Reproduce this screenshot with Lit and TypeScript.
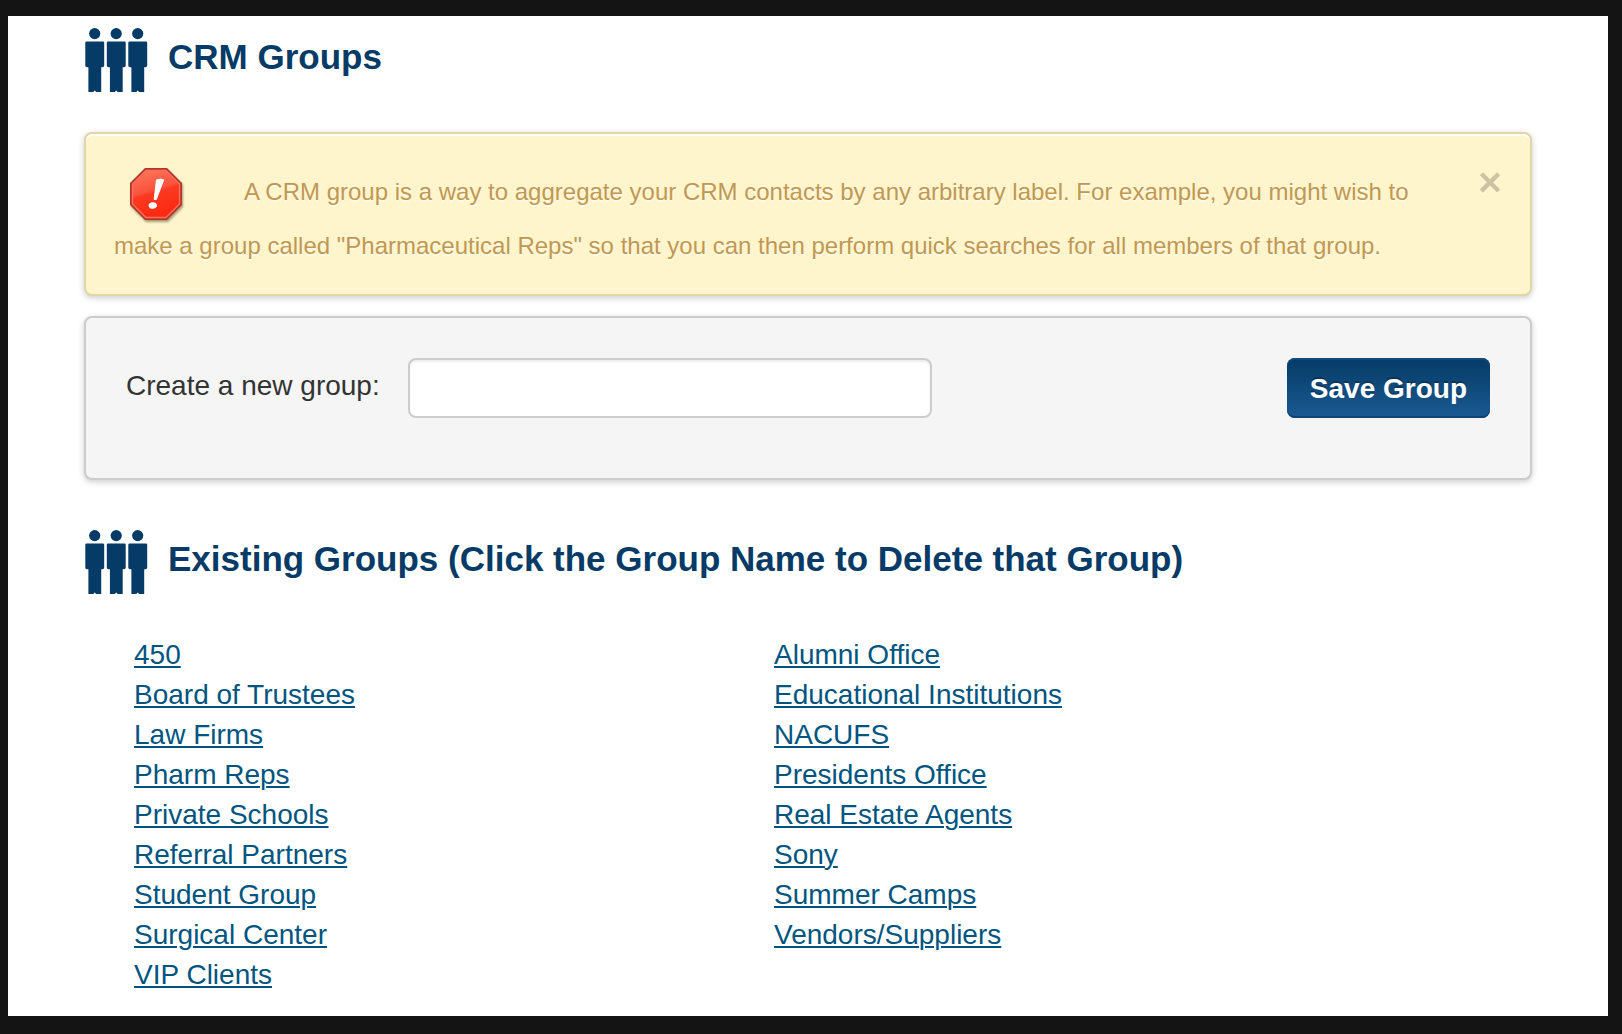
import { LitElement, html, svg, css } from "lit";
import { customElement, property, state } from "lit/decorators.js";

const GROUPS = [
  "450",
  "Alumni Office",
  "Board of Trustees",
  "Educational Institutions",
  "Law Firms",
  "NACUFS",
  "Pharm Reps",
  "Presidents Office",
  "Private Schools",
  "Real Estate Agents",
  "Referral Partners",
  "Sony",
  "Student Group",
  "Summer Camps",
  "Surgical Center",
  "Vendors/Suppliers",
  "VIP Clients",
];

/* One standing figure, starting at the given x inside the 64-unit icon. */
const person = (x: number) => svg`
  <g transform="translate(${x} 0)">
    <circle cx="9.7" cy="5.6" r="5.6" />
    <path d="M1.500 13.500H18q1.200 0 1.200 1.200V37.500q0 1.700-1.700 1.700H16.200V64H11.200L9.700 62.600 8.200 64H3.400V39.200H2Q.3 39.200.3 37.500V14.700Q.3 13.500 1.500 13.500z" />
  </g>
`;

@customElement("section-heading")
export class SectionHeading extends LitElement {
  static styles = css`
    :host {
      display: block;
    }
    .row {
      display: flex;
      gap: 20px;
      align-items: flex-start;
    }
    .people {
      flex: none;
      width: 64px;
      height: 64px;
      fill: #053b66;
    }
    .title {
      margin: 0;
      font-size: 35px;
      line-height: 58px;
      font-weight: bold;
      color: #053b66;
    }
  `;

  @property() text = "";

  render() {
    return html`
      <div class="row">
        <svg class="people" viewBox="0 0 64 64" aria-hidden="true">${[1, 22.5, 44].map(person)}</svg>
        <h2 class="title">${this.text}</h2>
      </div>
    `;
  }
}

@customElement("info-banner")
export class InfoBanner extends LitElement {
  static styles = css`
    :host {
      display: block;
    }
    .banner {
      display: flex;
      gap: 18px;
      align-items: flex-start;
      padding: 28px;
      border: 2px solid #dfd8a4;
      border-radius: 8px;
      background: #fff5cc;
      box-shadow: 0 2px 6px rgba(0, 0, 0, 0.2), inset 0 2px 0 #fff;
      color: #c09853;
      text-shadow: 0 2px 0 rgba(255, 255, 255, 0.5);
    }
    .message {
      flex: 1;
      margin: 0;
      font-size: 24px;
      line-height: 40px;
    }
    .stop {
      width: 64px;
      height: 64px;
      margin: 0 56px 0 10px;
      vertical-align: middle;
    }
    .close {
      flex: none;
      width: 24px;
      margin: 0;
      padding: 0;
      border: 0;
      background: none;
      font: bold 41px/40px "Liberation Sans", Arial, sans-serif;
      color: #000;
      opacity: 0.2;
      text-shadow: 0 2px 0 #fff;
      cursor: pointer;
    }
  `;

  @state() private open = true;

  render() {
    if (!this.open) return null;
    return html`
      <div class="banner">
        <p class="message"><svg class="stop" viewBox="0 0 64 64" aria-hidden="true">
            <defs>
              <linearGradient id="face" x1="0" y1="0" x2="0.3" y2="1">
                <stop offset="0" stop-color="#ff7a5e" />
                <stop offset="0.5" stop-color="#f9523c" />
                <stop offset="0.56" stop-color="#fb3a22" />
                <stop offset="1" stop-color="#fd2a10" />
              </linearGradient>
              <filter id="drop" x="-20%" y="-20%" width="140%" height="140%">
                <feDropShadow dx="1" dy="2" stdDeviation="1.2" flood-color="#6b5a30" flood-opacity="0.6" />
              </filter>
            </defs>
            <path d="M21 6H43L58 21V43L43 58H21L6 43V21Z" fill="#b8352a" filter="url(#drop)" />
            <path d="M22 8.500H42L55.500 22V42L42 55.500H22L8.500 42V22Z" fill="url(#face)" stroke="#f5705e" stroke-width="1.400" />
            <path d="M32.500 18q4.500-1.800 7.200-.2L32.300 37.500h-2.200Z" fill="#fff" stroke="#fff" stroke-linejoin="round" />
            <ellipse cx="28.800" cy="43.500" rx="4.200" ry="3.200" fill="#fff" transform="rotate(-10 28.800 43.500)" />
          </svg>A CRM group is a way to aggregate your CRM contacts by any arbitrary label. For example, you might wish to make a group called "Pharmaceutical Reps" so that you can then perform quick searches for all members of that group.</p>
        <button class="close" type="button" aria-label="Close" @click=${() => (this.open = false)}>×</button>
      </div>
    `;
  }
}

@customElement("app-root")
export class AppRoot extends LitElement {
  static styles = css`
    :host {
      display: flex;
      box-sizing: border-box;
      min-height: 100vh;
      padding: 16px 14px 18px 8px;
      background: #141414;
      font-family: "Liberation Sans", Arial, sans-serif;
      font-size: 28px;
      line-height: 40px;
      color: #333;
    }
    .page {
      flex: 1;
      padding: 12px 76px 20px;
      background: #fff;
    }
    .banner {
      margin: 40px 0 20px;
    }
    .panel {
      display: flex;
      align-items: flex-start;
      margin-bottom: 50px;
      padding: 40px 40px 60px;
      border: 2px solid #ccc;
      border-radius: 8px;
      background: #f5f5f5;
      box-shadow: 0 2px 6px rgba(0, 0, 0, 0.2);
    }
    .label {
      flex: none;
      margin-right: 28px;
      line-height: 56px;
    }
    .field {
      box-sizing: border-box;
      flex: 0 1 524px;
      min-width: 0;
      height: 60px;
      padding: 8px 12px;
      border: 2px solid #ccc;
      border-radius: 8px;
      background: #fff;
      box-shadow: inset 0 2px 2px rgba(0, 0, 0, 0.075);
      font: inherit;
      color: #555;
    }
    .save {
      box-sizing: border-box;
      flex: none;
      height: 60px;
      margin-left: auto;
      padding: 2px 23px 0;
      border: 0;
      border-radius: 8px;
      background: linear-gradient(#053b66, #1a5a92);
      box-shadow: inset 0 2px 0 #11497a, inset 0 -2px 0 #0f4474;
      font: inherit;
      font-weight: bold;
      color: #fff;
      text-shadow: 0 -2px 0 rgba(0, 0, 0, 0.25);
      cursor: pointer;
    }
    .groups {
      display: grid;
      grid-template-columns: repeat(2, minmax(0, 640px));
      margin: 41px 0 0;
      padding: 0 0 0 50px;
      list-style: none;
    }
    .link {
      color: #005580;
      text-decoration: underline;
      text-decoration-thickness: 2px;
      text-underline-offset: 2px;
    }
  `;

  @state() private groups = GROUPS;

  private save(e: Event) {
    e.preventDefault();
    const field = this.renderRoot.querySelector<HTMLInputElement>("#group-name")!;
    const name = field.value.trim();
    if (!name) return;
    this.groups = [...this.groups, name];
    field.value = "";
  }

  private remove(e: Event, name: string) {
    e.preventDefault();
    this.groups = this.groups.filter((g) => g !== name);
  }

  render() {
    return html`
      <main class="page">
        <section-heading text="CRM Groups"></section-heading>
        <info-banner class="banner"></info-banner>
        <form class="panel" @submit=${this.save}>
          <label class="label" for="group-name">Create a new group:</label>
          <input class="field" id="group-name" type="text" />
          <button class="save" type="submit">Save Group</button>
        </form>
        <section-heading text="Existing Groups (Click the Group Name to Delete that Group)"></section-heading>
        <ul class="groups">
          ${this.groups.map(
            (g) => html`<li><a class="link" href="#" @click=${(e: Event) => this.remove(e, g)}>${g}</a></li>`
          )}
        </ul>
      </main>
    `;
  }
}
